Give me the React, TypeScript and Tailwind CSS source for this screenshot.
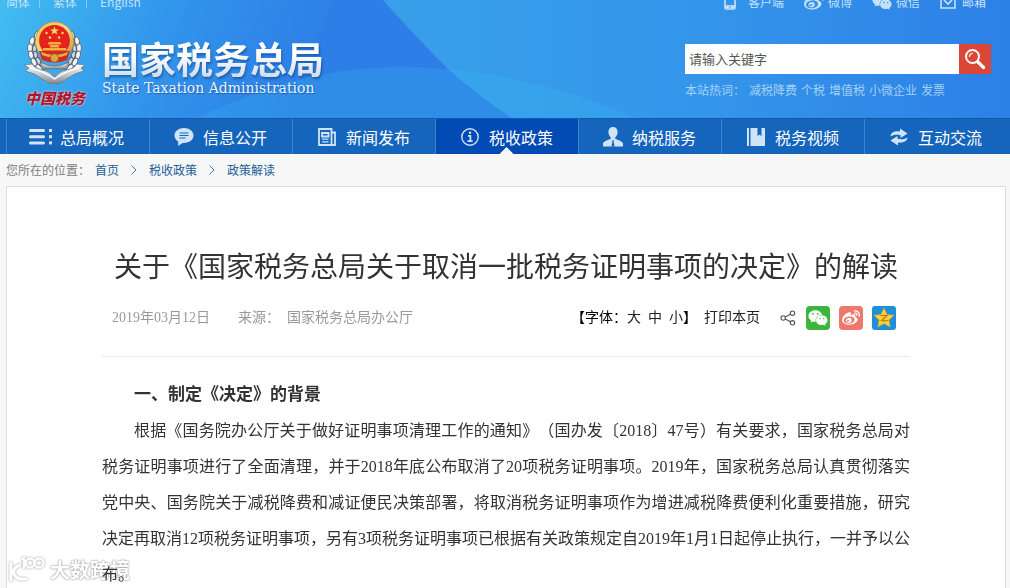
import type { ReactNode } from "react";
import { FaWeibo, FaWeixin } from "react-icons/fa";

interface NavItem {
  label: string;
  icon: ReactNode;
  active?: boolean;
}

const HOT_WORDS = ["减税降费", "个税", "增值税", "小微企业", "发票"];

const CRUMBS = ["首页", "税收政策", "政策解读"];

const NAV_ITEMS: NavItem[] = [
  {
    label: "总局概况",
    icon: (
      <svg width="24" height="18" viewBox="0 0 24 18" fill="currentColor">
        <rect x="0" y="1" width="16" height="3" rx="1.5" />
        <rect x="0" y="7.2" width="16" height="3" rx="1.5" />
        <rect x="0" y="13.4" width="16" height="3" rx="1.5" />
        <rect x="20" y="1" width="3" height="3" />
        <rect x="20" y="7.2" width="3" height="3" />
        <rect x="20" y="13.4" width="3" height="3" />
      </svg>
    ),
  },
  {
    label: "信息公开",
    icon: (
      <svg width="20" height="18" viewBox="0 0 20 18">
        <path
          d="M10 0C4.600 0 .5 3.300.5 7.600c0 2.600 1.500 4.800 3.800 6.100L4 18l4.600-3.100c.5.100.9.100 1.400.1 5.400 0 9.500-3.200 9.500-7.400S15.400 0 10 0z"
          fill="currentColor"
        />
        <path d="M5.500 5h9M5.500 7.500h9M5.500 10h6" stroke="#1565bd" strokeWidth="1.200" />
      </svg>
    ),
  },
  {
    label: "新闻发布",
    icon: (
      <svg width="18" height="18" viewBox="0 0 18 18" fill="none" stroke="currentColor" strokeWidth="1.800">
        <path d="M1 1h12.500v16H1z" />
        <path d="M13.500 4.500H17V17h-3.500" />
        <path d="M4 5h6.500v3.500H4z" />
        <path d="M4 11.200h6.500M4 13.800h6.500" strokeWidth="1.300" />
      </svg>
    ),
  },
  {
    label: "税收政策",
    active: true,
    icon: (
      <svg width="18" height="18" viewBox="0 0 18 18" fill="none" stroke="currentColor">
        <circle cx="9" cy="9" r="8.200" strokeWidth="1.400" />
        <path d="M7 7.800h2.400v5M6.500 13.200h5.200" strokeWidth="1.700" />
        <circle cx="9" cy="4.800" r="1.200" fill="currentColor" stroke="none" />
      </svg>
    ),
  },
  {
    label: "纳税服务",
    icon: (
      <svg width="20" height="20" viewBox="0 0 20 20">
        <path
          d="M10 0c3 0 4.600 2 4.600 5 0 2.200-.9 4.200-2.300 5.200v1.700c2.800.9 7.200 2.400 7.700 4.600V19.500H0v-3c.5-2.200 4.900-3.700 7.700-4.600v-1.700C6.300 9.200 5.400 7.200 5.400 5c0-3 1.600-5 4.600-5z"
          fill="currentColor"
        />
        <path d="M9 13.500h2l-.4 1.500 1 4.500H8.400l1-4.500z" fill="#1565bd" />
      </svg>
    ),
  },
  {
    label: "税务视频",
    icon: (
      <svg width="18" height="18" viewBox="0 0 18 18" fill="currentColor">
        <rect x="0" y="0" width="2" height="18" />
        <path d="M3.500 0h7v8l2-1.600 2 1.600V0H18v18H3.500z" />
      </svg>
    ),
  },
  {
    label: "互动交流",
    icon: (
      <svg width="18" height="18" viewBox="0 0 18 18" fill="currentColor">
        <path d="M.5 8.500C.8 4.800 4.500 2.800 10 3.500V.500l7.500 5-7 4.500V7.200C6 6.300 3 6.800.5 8.500z" />
        <path d="M17.500 9.500c-.3 3.700-4 5.700-9.500 5v3L.5 12.500l7-4.500v2.800c4.500.9 7.500.4 10-1.300z" />
      </svg>
    ),
  },
];

function HeaderBackdrop() {
  return (
    <svg
      className="absolute inset-0 h-full w-full"
      viewBox="0 0 1010 118"
      preserveAspectRatio="none"
      aria-hidden="true"
    >
      <defs>
        <linearGradient id="sky" gradientUnits="userSpaceOnUse" x1="0" y1="0" x2="290" y2="130">
          <stop offset="0" stopColor="#42bdf1" />
          <stop offset="0.500" stopColor="#3295ec" />
          <stop offset="1" stopColor="#2d7ee6" />
        </linearGradient>
        <linearGradient id="wave" x1="0" y1="0" x2="1" y2="0">
          <stop offset="0" stopColor="#399fea" />
          <stop offset="0.500" stopColor="#3496eb" />
          <stop offset="1" stopColor="#2d80e6" />
        </linearGradient>
      </defs>
      <rect width="1010" height="118" fill="url(#sky)" />
      <path d="M383 0Q415 36 447 68Q478 96 512 118H1010V0z" fill="url(#wave)" />
      <path d="M195 118C260 90 320 67 400 67C480 67 560 84 635 118z" fill="#38bdf1" fillOpacity="0.220" />
    </svg>
  );
}

function Grains({ flip }: { flip?: boolean }) {
  const grains = [
    [27, 25, 20],
    [22, 31, 10],
    [20, 38, 0],
    [21, 45, -12],
    [24, 52, -25],
    [29, 58, -40],
  ];
  return (
    <g transform={flip ? "translate(89 0) scale(-1 1)" : undefined}>
      {grains.map(([x, y, angle]) => (
        <g key={y} transform={`rotate(${angle} ${x} ${y})`}>
          <ellipse cx={x} cy={y} rx="2.400" ry="4.200" fill="#f2f4f6" stroke="#59636e" strokeWidth="0.900" />
          <ellipse cx={x + 4.5} cy={y + 1} rx="2" ry="4" fill="#cfd4d9" stroke="#4b5560" strokeWidth="0.900" />
        </g>
      ))}
    </g>
  );
}

function Emblem() {
  return (
    <svg width="62" height="66" viewBox="14 10 62 66" aria-hidden="true">
      <defs>
        <linearGradient id="gold" x1="0" y1="0" x2="1" y2="1">
          <stop offset="0" stopColor="#e9bd4c" />
          <stop offset="0.500" stopColor="#f3dc86" />
          <stop offset="1" stopColor="#b98a2c" />
        </linearGradient>
        <linearGradient id="silver" x1="0" y1="0" x2="0" y2="1">
          <stop offset="0" stopColor="#ffffff" />
          <stop offset="0.550" stopColor="#bfc5ca" />
          <stop offset="1" stopColor="#7b848c" />
        </linearGradient>
      </defs>
      <Grains />
      <Grains flip />
      <circle cx="44.500" cy="31" r="19.200" fill="url(#gold)" stroke="#a98234" strokeWidth="0.600" />
      <circle cx="44.500" cy="30.500" r="15.400" fill="#e5231c" />
      <path d="M29 41h31l-3 9q-12.500 5-25 0z" fill="#d12a20" />
      <path d="M31 42q13.500 6 27 0l-1 3q-12.500 5-25 0z" fill="#e2b24a" />
      <circle cx="44.500" cy="48" r="4.200" fill="#d9a53f" stroke="#a4451f" strokeWidth="0.800" />
      <path
        d="M44.500 16.500l1.100 3 3.200.1-2.500 2 .9 3-2.700-1.800-2.700 1.800.9-3-2.500-2 3.200-.1z"
        fill="#ffdf5a"
      />
      <circle cx="36.500" cy="23" r="1.200" fill="#ffdf5a" />
      <circle cx="40" cy="27.500" r="1.200" fill="#ffdf5a" />
      <circle cx="49" cy="27.500" r="1.200" fill="#ffdf5a" />
      <circle cx="52.500" cy="23" r="1.200" fill="#ffdf5a" />
      <path d="M39 32h11l1.500 2.500h-14zM40 35h9v2.500h-9zM33 38h23v2.500H33z" fill="#f2b03c" />
      <path d="M30 52q14.500 8 29 0l-5 7H35z" fill="url(#silver)" stroke="#68727b" strokeWidth="0.800" />
      <path
        d="M14 55l8-1q3 5 10 6 8 1 12.500 7Q49 61 57 60q7-1 10-6l8 1-4 3 3 3q-10 2-17 8-6 5-12.500 5T32 69q-7-6-17-8l4-3z"
        fill="url(#silver)"
        stroke="#707981"
        strokeWidth="0.800"
      />
      <path d="M20 58q12 2 24.500 11Q57 60 69 58" fill="none" stroke="#ffffff" strokeWidth="1.500" />
    </svg>
  );
}

function QzoneIcon() {
  return (
    <svg width="24" height="24" viewBox="0 0 24 24" aria-hidden="true">
      <rect width="24" height="24" rx="3" fill="#1d8fdb" />
      <path
        d="M12 2l3 6.500 7 .8-5.200 4.800 1.400 7L12 17.600 5.800 21.100l1.400-7L2 9.300l7-.8z"
        fill="#fbd13a"
        stroke="#e9a11c"
        strokeWidth="0.600"
      />
      <path d="M8.500 9.500h6.500l-5.500 5q3.500 1 6.500-.3" fill="none" stroke="#c5720d" strokeWidth="1.200" />
    </svg>
  );
}

function TopBar() {
  return (
    <div className="relative -mt-2 flex h-5 items-center justify-between pr-6 pl-1.5 text-xs text-[#c3e2fa]">
      <div className="flex items-center gap-[9px]">
        <a href="#">简体</a>
        <span className="h-3 w-px bg-[#8cc8f5]" />
        <a href="#" className="pl-1">繁体</a>
        <span className="h-3 w-px bg-[#8cc8f5]" />
        <a href="#" className="pl-1">English</a>
      </div>
      <div className="flex items-center gap-5">
        <a href="#" className="flex items-center gap-3">
          <svg width="12" height="16" viewBox="0 0 12 16" fill="none" stroke="currentColor">
            <rect x="1" y="1" width="10" height="14" rx="1" strokeWidth="1.600" />
            <path d="M1 12.700h10" strokeWidth="3" />
            <circle cx="6" cy="13" r="0.800" fill="#3495ec" stroke="none" />
          </svg>
          客户端
        </a>
        <a href="#" className="flex items-center gap-1">
          <FaWeibo className="size-5" />
          微博
        </a>
        <a href="#" className="flex items-center gap-1">
          <FaWeixin className="size-5" />
          微信
        </a>
        <a href="#" className="flex items-center gap-1.5">
          <svg width="16" height="14" viewBox="0 0 16 14" fill="none" stroke="currentColor" strokeWidth="1.600">
            <path d="M1 1h14v12H1z" />
            <path d="M4 5l4 4 4-4" />
          </svg>
          邮箱
        </a>
      </div>
    </div>
  );
}

function SearchBox() {
  return (
    <div className="mt-8 w-[306px]">
      <form className="flex h-[30px]" onSubmit={(e) => e.preventDefault()}>
        <input
          type="text"
          aria-label="请输入关键字"
          placeholder="请输入关键字"
          className="min-w-0 flex-1 bg-white px-1 text-[13px] text-[#555] placeholder:text-[#555] focus:outline-none"
        />
        <button type="submit" aria-label="搜索" className="flex w-8 items-center justify-center bg-[#dc4636]">
          <svg width="22" height="22" viewBox="0 0 22 22" fill="none" stroke="#fff" strokeLinecap="round">
            <circle cx="8.500" cy="8.500" r="6.500" strokeWidth="2" />
            <path d="M5.500 8.500a3 3 0 0 1 3-3" strokeWidth="1.200" />
            <path d="M14 14l5.500 5.500" strokeWidth="3.200" />
          </svg>
        </button>
      </form>
      <div className="mt-1.5 flex gap-1 text-xs leading-5 text-[#a3d0f6]">
        <span>本站热词：</span>
        {HOT_WORDS.map((word) => (
          <a key={word} href="#">
            {word}
          </a>
        ))}
      </div>
    </div>
  );
}

function Header() {
  return (
    <header className="relative flex h-[118px] flex-col">
      <HeaderBackdrop />
      <TopBar />
      <div className="relative flex justify-between pr-[19px] pl-6">
        <a href="#" className="flex gap-4">
          <div className="flex w-[62px] flex-col items-center pt-2">
            <Emblem />
            <span className="text-[15px] leading-6 font-black whitespace-nowrap text-[#b3132b] italic [text-shadow:0_0_2px_#fff]">
              中国税务
            </span>
          </div>
          <div className="pt-[26px]">
            <div className="bg-linear-to-b from-white from-40% to-[#cfdbe8] bg-clip-text text-[37px] leading-10 font-bold text-transparent drop-shadow-[1px_2px_1px_rgba(10,50,120,0.5)]">
              国家税务总局
            </div>
            <div className="font-['DejaVu_Serif','Liberation_Serif',serif] text-sm leading-5 text-[#eaf4fd] [text-shadow:1px_1px_1px_rgba(10,50,120,0.5)]">
              State Taxation Administration
            </div>
          </div>
        </a>
        <SearchBox />
      </div>
    </header>
  );
}

function MainNav() {
  return (
    <nav className="border-t border-[#1259a8] bg-[#1565bd] pr-[3px] pl-1.5">
      <ul className="grid grid-cols-7">
        {NAV_ITEMS.map((item) => (
          <li key={item.label} className="relative">
            <a
              href="#"
              className={`flex h-[35px] items-center gap-[7px] border-l border-[#3a86d3] pl-[22px] text-base text-white ${
                item.active ? "bg-[#024bb5]" : ""
              }`}
            >
              <span className="flex w-6 justify-center text-[#cfe4f8]">{item.icon}</span>
              {item.label}
            </a>
            {item.active && (
              <span className="absolute bottom-0 left-1/2 h-[7px] w-3.5 -translate-x-1/2 bg-[#f7f7f7] [clip-path:polygon(50%_0,100%_100%,0_100%)]" />
            )}
          </li>
        ))}
      </ul>
    </nav>
  );
}

function Breadcrumb() {
  return (
    <div className="flex h-8 items-center pl-1.5 text-xs text-[#808080]">
      <span className="mr-[29px] w-[60px] whitespace-nowrap">您所在的位置：</span>
      {CRUMBS.map((crumb, i) => (
        <span key={crumb} className="flex items-center">
          {i > 0 && (
            <svg className="mx-3" width="6" height="10" viewBox="0 0 6 10" fill="none" stroke="#3f78ab">
              <path d="M0.500 0.500L5 5L0.500 9.500" />
            </svg>
          )}
          <a href="#" className="text-[#1b5e97]">
            {crumb}
          </a>
        </span>
      ))}
    </div>
  );
}

function ArticleMeta() {
  return (
    <div className="mt-[18px] flex items-center justify-between border-b border-[#ebebeb] pr-3.5 pb-[26px] pl-2.5 text-sm leading-6">
      <div className="flex text-[#999]">
        <time dateTime="2019-03-12">2019年03月12日</time>
        <span className="ml-7">来源：</span>
        <span className="ml-[7px]">国家税务总局办公厅</span>
      </div>
      <div className="flex items-center text-[#222]">
        <span className="text-black">【字体：</span>
        <div className="flex gap-[7px]">
          <button type="button">大</button>
          <button type="button">中</button>
          <button type="button">小</button>
        </div>
        <span className="text-black">】</span>
        <button type="button" className="ml-[7px]">
          打印本页
        </button>
        <svg className="ml-5 size-4" viewBox="0 0 16 16" fill="none" stroke="#555" strokeWidth="1.100">
          <circle cx="3.200" cy="8" r="2.200" />
          <circle cx="12.500" cy="3.200" r="2.200" />
          <circle cx="12.500" cy="12.800" r="2.200" />
          <path d="M5.200 7l5.300-2.800M5.200 9l5.300 2.800" />
        </svg>
        <div className="ml-2.5 flex gap-[9px]">
          <button
            type="button"
            aria-label="微信"
            className="flex size-6 items-center justify-center rounded-sm bg-[#3bb53b] text-white"
          >
            <FaWeixin className="size-5" />
          </button>
          <button
            type="button"
            aria-label="微博"
            className="flex size-6 items-center justify-center rounded-sm bg-[#f0776c] text-white"
          >
            <FaWeibo className="size-[18px]" />
          </button>
          <button type="button" aria-label="QQ空间">
            <QzoneIcon />
          </button>
        </div>
      </div>
    </div>
  );
}

function Watermark() {
  return (
    <div className="pointer-events-none fixed bottom-1 left-2 flex items-center gap-1" aria-hidden="true">
      <svg
        className="drop-shadow-[0_0_1px_#999]"
        width="38"
        height="28"
        viewBox="0 0 38 28"
        fill="none"
        stroke="#fff"
        strokeWidth="3"
        strokeLinecap="round"
      >
        <path d="M3 7v17M12 9Q4 12 6 18t12 5" />
        <path d="M14 3l2-1v10" strokeWidth="2.400" />
        <circle cx="22" cy="7" r="4.500" strokeWidth="2.400" />
        <circle cx="31" cy="7" r="4.500" strokeWidth="2.400" />
      </svg>
      <span className="text-xl leading-7 font-bold text-white [text-shadow:0_0_2px_#999,0_0_2px_#aaa]">
        大数跨境
      </span>
    </div>
  );
}

export default function App() {
  return (
    <div className="min-h-screen overflow-hidden bg-[#f7f7f7] font-['Noto_Sans_CJK_SC',sans-serif] [text-spacing-trim:space-all]">
      <Header />
      <MainNav />
      <Breadcrumb />
      <main className="mr-1 ml-1.5 border border-[#dcdcdc] bg-white px-4 pt-[61px] pb-2">
        <Watermark />
        {/* digits are half an em wide in the serif face */}
        <article className="relative mx-auto max-w-[808px] font-['Liberation_Serif','Noto_Sans_CJK_SC',sans-serif] text-[#333]">
          <h1 className="text-center text-[28px] leading-10">
            关于《国家税务总局关于取消一批税务证明事项的决定》的解读
          </h1>
          <ArticleMeta />
          <div className="mt-5 text-justify text-base leading-9">
            <h2 className="pl-8 text-[17px] leading-9 font-bold">一、制定《决定》的背景</h2>
            <p className="indent-8">
              根据《国务院办公厅关于做好证明事项清理工作的通知》（国办发〔2018〕47号）有关要求，国家税务总局对税务证明事项进行了全面清理，并于2018年底公布取消了20项税务证明事项。2019年，国家税务总局认真贯彻落实党中央、国务院关于减税降费和减证便民决策部署，将取消税务证明事项作为增进减税降费便利化重要措施，研究决定再取消12项税务证明事项，另有3项税务证明事项已根据有关政策规定自2019年1月1日起停止执行，一并予以公布。
            </p>
          </div>
        </article>
      </main>
    </div>
  );
}
